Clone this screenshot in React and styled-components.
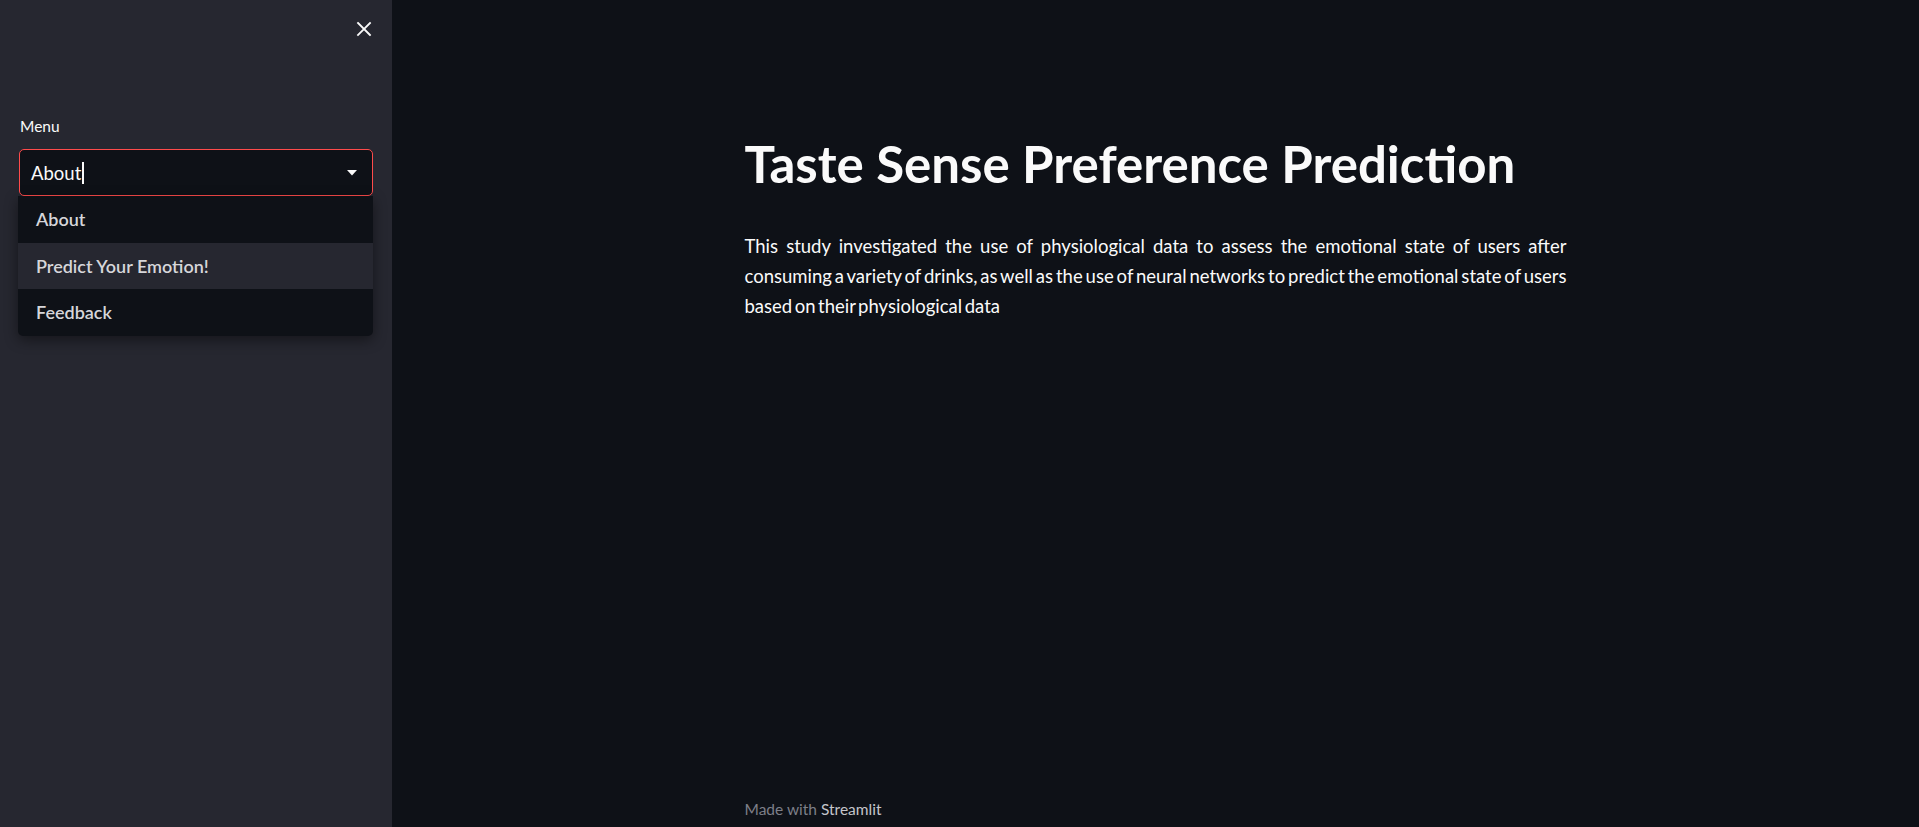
import React from 'react'
import styled, { createGlobalStyle } from 'styled-components'

const menuItems = ['About', 'Predict Your Emotion!', 'Feedback']
const activeItem = 1

// the paragraph is justified; lines are split as in the original layout
const paragraphLines = [
    'This study investigated the use of physiological data to assess the emotional state of users after',
    'consuming a variety of drinks, as well as the use of neural networks to predict the emotional state of users',
    'based on their physiological data',
]

const App = () => {
    return (
        <>
            <GlobalStyle />
            <StyledLayout>
                <StyledSidebar>
                    <SidebarHeader>
                        <IconButton aria-label="close sidebar">
                            <svg width="16" height="16" viewBox="0 0 16 16">
                                <path d="M2 2 L14 14 M14 2 L2 14" stroke="#fafafa" strokeWidth="1.8" strokeLinecap="square" />
                            </svg>
                        </IconButton>
                    </SidebarHeader>
                    <SidebarContent>
                        <FieldLabel>Menu</FieldLabel>
                        <SelectWrap>
                            <SelectBox>
                                <SelectValue>
                                    About
                                    <Caret />
                                </SelectValue>
                                <svg width="10" height="6" viewBox="0 0 10 6">
                                    <polygon points="0,0 10,0 5,5.5" fill="#fafafa" />
                                </svg>
                            </SelectBox>
                            <DropMenu>
                                {menuItems.map((item, i) => (
                                    <DropItem key={item} active={i === activeItem}>
                                        {item}
                                    </DropItem>
                                ))}
                            </DropMenu>
                        </SelectWrap>
                    </SidebarContent>
                </StyledSidebar>

                <StyledMain>
                    <TopBar>
                        <Hamburger aria-label="main menu">
                            <span />
                            <span />
                            <span />
                        </Hamburger>
                    </TopBar>
                    <BlockContainer>
                        <Title>Taste Sense Preference Prediction</Title>
                        <Paragraph>
                            {paragraphLines.map((line, i) => (
                                <Line key={i} last={i === paragraphLines.length - 1}>
                                    {line}
                                </Line>
                            ))}
                        </Paragraph>
                    </BlockContainer>
                    <Footer>
                        Made with <strong>Streamlit</strong>
                    </Footer>
                </StyledMain>
            </StyledLayout>
        </>
    )
}

const GlobalStyle = createGlobalStyle`
    html, body {
        margin: 0;
        padding: 0;
        background: #0e1117;
    }
    body {
        font-family: Lato, 'Liberation Sans', sans-serif;
        color: #fafafa;
    }
    * {
        box-sizing: border-box;
    }
`

const StyledLayout = styled.div`
    display: flex;
    width: 100%;
    height: 100vh;
    overflow: hidden;
`

const StyledSidebar = styled.aside`
    width: 392px;
    flex-shrink: 0;
    background-color: #262730;
    display: flex;
    flex-direction: column;
`

const SidebarHeader = styled.div`
    display: flex;
    justify-content: flex-end;
    padding: 20px 19px 0 0;
    height: 40px;
`

const IconButton = styled.button`
    background: none;
    border: none;
    padding: 0;
    width: 18px;
    height: 18px;
    display: flex;
    align-items: center;
    justify-content: center;
    cursor: pointer;
`

const SidebarContent = styled.div`
    padding: 74px 19px 0 19px;
    display: flex;
    flex-direction: column;
`

const FieldLabel = styled.label`
    font-size: 15.5px;
    line-height: 24px;
    color: #fafafa;
    margin-bottom: 11px;
    padding-left: 1px;
`

const SelectWrap = styled.div`
    position: relative;
`

const SelectBox = styled.div`
    height: 47px;
    border: 1px solid #ff4b4b;
    border-radius: 5px;
    background-color: #0e1117;
    display: flex;
    align-items: center;
    justify-content: space-between;
    padding: 0 15px 0 11px;
`

const SelectValue = styled.div`
    display: flex;
    align-items: center;
    font-size: 18.5px;
    color: #fafafa;
`

const Caret = styled.span`
    display: inline-block;
    width: 2px;
    height: 22px;
    margin-left: 1px;
    background-color: #fafafa;
`

const DropMenu = styled.ul`
    position: absolute;
    top: 47px;
    left: -1px;
    right: 0;
    margin: 0;
    padding: 0;
    list-style: none;
    background-color: #0e1117;
    border-radius: 0 0 5px 5px;
    box-shadow: 0 4px 14px rgba(0, 0, 0, 0.45);
    overflow: hidden;
`

const DropItem = styled.li`
    height: 46.5px;
    display: flex;
    align-items: center;
    padding-left: 18px;
    font-size: 18px;
    font-weight: 600;
    color: #d6d6da;
    background-color: ${(props) => (props.active ? '#262730' : 'transparent')};
`

const StyledMain = styled.main`
    flex: 1;
    display: flex;
    flex-direction: column;
    min-width: 0;
`

const TopBar = styled.div`
    display: flex;
    justify-content: flex-end;
    padding: 21px 16px 0 0;
    height: 0;
`

const Hamburger = styled.button`
    background: none;
    border: none;
    padding: 0;
    width: 18px;
    display: flex;
    flex-direction: column;
    gap: 3px;
    span {
        display: block;
        height: 2px;
        background-color: #fafafa;
    }
`

const BlockContainer = styled.div`
    width: 822px;
    margin: 0 auto;
    padding-top: 112px;
    flex: 1;
`

const Title = styled.h1`
    margin: 0;
    font-size: 51px;
    line-height: 62px;
    font-weight: 700;
    color: #fafafa;
`

const Paragraph = styled.p`
    margin: 36px 0 0 0;
    font-size: 18.5px;
    line-height: 30px;
    word-spacing: -2.2px;
    color: #fafafa;
`

const Line = styled.span`
    display: block;
    white-space: nowrap;
    text-align: left;
    text-align-last: ${(props) => (props.last ? 'left' : 'justify')};
`

const Footer = styled.footer`
    width: 822px;
    margin: 0 auto;
    padding-bottom: 8px;
    font-size: 15.5px;
    line-height: 20px;
    color: #7d7f88;
    strong {
        font-weight: 400;
        color: #c4c5ca;
    }
`

export default App
